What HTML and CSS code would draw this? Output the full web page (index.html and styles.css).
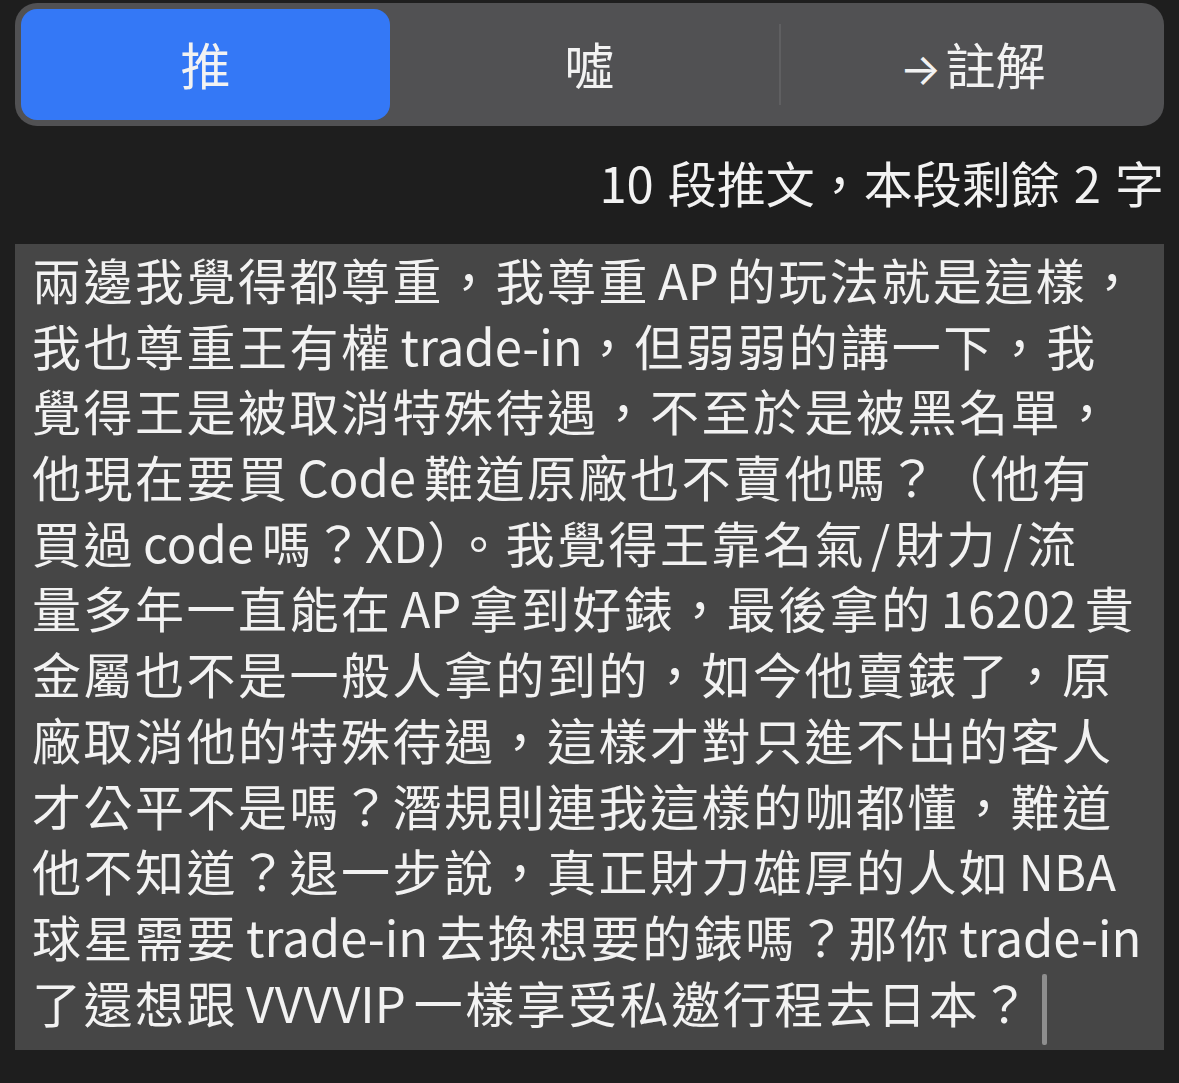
FILE: index.html
```html
<html>
  <head>
    <meta charset="utf-8">
    <link rel="stylesheet" href="styles.css">
  </head>
  <body>
    <div class="page">
      <ul class="segments">
        <li class="segment activeSegment"><span>推</span></li>
        <li class="segment"><span>噓</span></li>
        <li class="segment withDivider"><span><i class="arrow">→</i>註解</span></li>
      </ul>
      <div class="counter"><b class="latin">10</b>段推文，本段剩餘<b class="latin">2</b>字</div>
      <div class="editor">
        <div class="line">兩邊我覺得都尊重，我尊重<b class="latin">AP</b>的玩法就是這樣，</div>
        <div class="line">我也尊重王有權<b class="latin end">trade-in</b>，但弱弱的講一下，我</div>
        <div class="line">覺得王是被取消特殊待遇，不至於是被黑名單，</div>
        <div class="line">他現在要買<b class="latin">Code</b>難道原廠也不賣他嗎？（他有</div>
        <div class="line">買過<b class="latin">code</b>嗎？<b class="latin bare">XD</b>）。我覺得王靠名氣<b class="latin slash">/</b>財力<b class="latin slash">/</b>流</div>
        <div class="line">量多年一直能在<b class="latin">AP</b>拿到好錶，最後拿的<b class="latin">16202</b>貴</div>
        <div class="line">金屬也不是一般人拿的到的，如今他賣錶了，原</div>
        <div class="line">廠取消他的特殊待遇，這樣才對只進不出的客人</div>
        <div class="line">才公平不是嗎？潛規則連我這樣的咖都懂，難道</div>
        <div class="line">他不知道？退一步說，真正財力雄厚的人如<b class="latin">NBA</b></div>
        <div class="line">球星需要<b class="latin">trade-in</b>去換想要的錶嗎？那你<b class="latin">trade-in</b></div>
        <div class="line">了還想跟<b class="latin">VVVVIP</b>一樣享受私邀行程去日本？<span class="caret"></span></div>
      </div>
    </div>
  </body>
</html>
```

FILE: styles.css
```css
html, body {
  margin: 0;
  padding: 0;
  background-color: #1e1e1e;
}

.page {
  padding: 3px 15px 0 15px;
  font-family: "Noto Sans CJK TC", sans-serif;
  color: #f2f2f2;
}

ul.segments {
  display: grid;
  grid-template-columns: 1fr 1fr 1fr;
  margin: 0;
  padding: 6px;
  height: 111px;
  list-style: none;
  background-color: #515153;
  border-radius: 22px;
}

.segment {
  display: flex;
  align-items: center;
  justify-content: center;
  position: relative;
  font-size: 50px;
}

.segment span {
  position: relative;
  top: -2px;
}

.arrow {
  font-style: normal;
  font-family: Inter, sans-serif;
  font-size: 44px;
  margin-right: 4px;
}

.activeSegment {
  margin-right: 10px;
  background-color: #3478f6;
  border-radius: 16px;
}

.withDivider {
  border-left: solid 2px #5f5f61;
  margin: 15px 0;
  padding-left: 6px;
}

.counter {
  margin-top: 23px;
  text-align: right;
  font-size: 49px;
  line-height: 66px;
}

.counter .latin {
  margin: 0 14px;
}

.latin {
  font-weight: normal;
  letter-spacing: 0;
  margin: 0 8px;
}

.latin.end {
  margin-right: 0;
}

.latin.bare {
  margin: 0;
}

.latin.slash {
  margin: 0 5px;
}

.editor {
  margin-top: 29px;
  padding: 2px 17px 16px 17px;
  background-color: #464646;
  font-size: 49px;
  line-height: 65.7px;
  letter-spacing: 2.5px;
}

.line {
  white-space: nowrap;
  height: 65.7px;
}

.caret {
  display: inline-block;
  width: 5px;
  height: 71px;
  margin: -6px 0 -6px 10px;
  vertical-align: middle;
  background-color: #8e8e8e;
  border-radius: 2px;
}
```
